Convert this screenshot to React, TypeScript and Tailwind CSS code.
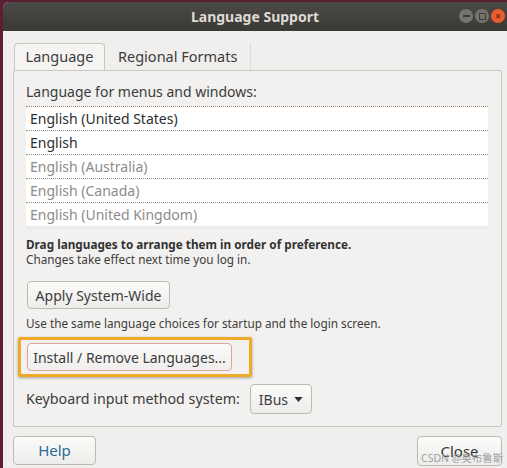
import { useState } from "react";

const languages = [
  { name: "English (United States)", active: true },
  { name: "English", active: true },
  { name: "English (Australia)", active: false },
  { name: "English (Canada)", active: false },
  { name: "English (United Kingdom)", active: false },
];

export default function App() {
  const [tab, setTab] = useState("language");

  return (
    <div
      className="w-[507px] h-[468px] overflow-hidden bg-[#5b1f33] pl-[3px] pt-[2px]"
      style={{ fontFamily: "'Noto Sans', 'Open Sans', sans-serif" }}
    >
      <div className="w-[520px] h-[480px] flex flex-col bg-[#f0efed] rounded-tl-[6px] overflow-hidden">
        {/* title bar */}
        <div className="h-[29px] shrink-0 relative flex items-center justify-center bg-gradient-to-b from-[#4b4a46] to-[#3a3935] pr-[16px]">
          <span className="text-[14px] font-bold text-[#dfdbd2]">Language Support</span>
          <div className="absolute right-[18px] top-[7px] flex items-center gap-[2px]">
            <div className="w-[14px] h-[14px] rounded-full bg-[#75736e] flex items-center justify-center">
              <div className="w-[7px] h-[1.5px] bg-[#3c3b37]" />
            </div>
            <div className="w-[14px] h-[14px] rounded-full bg-[#75736e] flex items-center justify-center">
              <div className="w-[7px] h-[7px] border border-[#3c3b37]" />
            </div>
            <div className="w-[14px] h-[14px] rounded-full bg-[#ec5c2c] flex items-center justify-center text-[10px] leading-none text-[#3c1a10]">
              ×
            </div>
          </div>
        </div>

        {/* body */}
        <div className="flex flex-col pl-[10px] pt-[12px] w-[499px] text-[#3c3c3c]">
          {/* tabs */}
          <div className="flex items-end h-[27px]">
            <button
              onClick={() => setTab("language")}
              className={`h-[27px] w-[91px] ml-px border border-b-0 border-[#c9c7c2] rounded-t-[4px] text-[14.5px] ${
                tab === "language" ? "bg-[#f5f4f2]" : ""
              }`}
            >
              Language
            </button>
            <button
              onClick={() => setTab("regional")}
              className="h-[27px] px-[13px] text-[14.5px] border-r border-[#dddbd7]"
            >
              Regional Formats
            </button>
          </div>

          {/* panel */}
          <div className="border border-[#c9c7c2] rounded-[2px] bg-[#f2f1ef] h-[357px] pl-[12px] pr-[13px] pt-[12px] flex flex-col">
            <div className="text-[14px] leading-[18px]">Language for menus and windows:</div>
            <div className="mt-[5px] bg-white border-b-[3px] border-[#ebeae8]">
              {languages.map((l) => (
                <div
                  key={l.name}
                  className={`h-[24px] pl-[4px] pb-[1px] flex items-center text-[14px] border-t border-dotted border-[#a0866c] ${
                    l.active ? "text-[#2e2e2e]" : "text-[#8c8c8c]"
                  }`}
                >
                  {l.name}
                </div>
              ))}
            </div>

            <div className="mt-[8px] text-[11.75px] leading-[15px] font-bold text-[#333]">
              Drag languages to arrange them in order of preference.
            </div>
            <div className="text-[11.75px] leading-[15px]">Changes take effect next time you log in.</div>

            <button className="mt-[14px] self-start h-[28px] w-[143px] ml-px border border-[#bdbab4] rounded-[4px] bg-gradient-to-b from-[#fbfbfa] to-[#edecea] text-[14px]">
              Apply System-Wide
            </button>

            <div className="mt-[7px] text-[11.75px] leading-[15px]">
              Use the same language choices for startup and the login screen.
            </div>

            <div className="mt-[6px] -ml-[8px] self-start w-[234px] border-[3px] border-[#f0aa2a] rounded-[2px] shadow-[0_1px_3px_rgba(0,0,0,0.35)] pl-[6px] py-[3px]">
              <button className="h-[28px] w-[205px] border border-[#d9a79a] rounded-[4px] bg-gradient-to-b from-[#fbfbfa] to-[#efeeec] text-[14px]">
                Install / Remove Languages...
              </button>
            </div>

            <div className="mt-[7px] flex items-center gap-[10px]">
              <span className="text-[14.25px]">Keyboard input method system:</span>
              <button className="h-[30px] w-[62px] pl-[8px] pr-[8px] flex items-center justify-between border border-[#bdbab4] rounded-[4px] bg-gradient-to-b from-[#fbfbfa] to-[#edecea] text-[14px]">
                IBus
                <svg width="9" height="5" viewBox="0 0 10 6">
                  <path d="M0 0 L10 0 L5 6 Z" fill="#2e2e2e" />
                </svg>
              </button>
            </div>
          </div>

          {/* bottom buttons */}
          <div className="mt-[9px] flex justify-between">
            <button className="h-[29px] w-[83px] border border-[#bdbab4] rounded-[4px] bg-gradient-to-b from-[#fbfbfa] to-[#edecea] text-[15px] text-[#2a6c96]">
              Help
            </button>
            <button className="relative h-[30px] w-[85px] border border-[#bdbab4] rounded-[4px] bg-gradient-to-b from-[#fbfbfa] to-[#edecea] text-[15px] text-[#333]">
              Close
              <span
                className="absolute left-[3px] top-[14px] text-[10.5px] text-[#a0a0a0] whitespace-nowrap"
                style={{ fontFamily: "'Noto Sans', 'Noto Sans CJK SC', sans-serif" }}
              >
                CSDN @奥布鲁斯
              </span>
            </button>
          </div>
        </div>
      </div>
    </div>
  );
}
